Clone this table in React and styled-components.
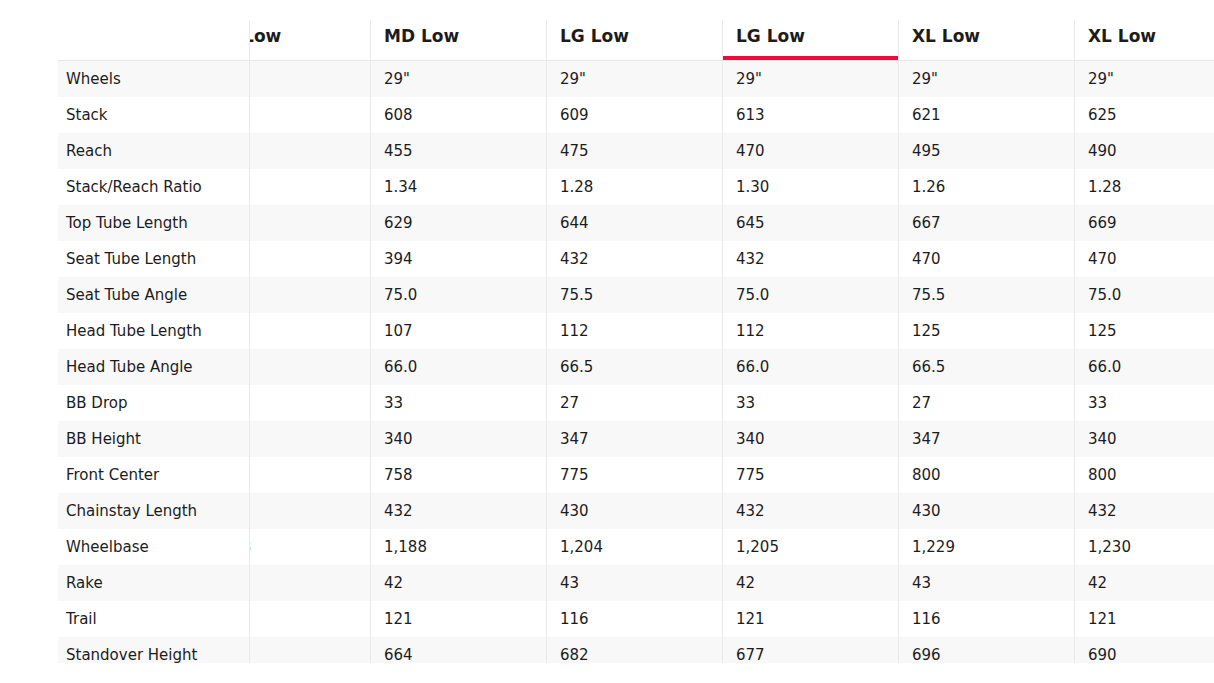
import { useLayoutEffect, useRef } from 'react';
import styled, { createGlobalStyle } from 'styled-components';

const sizes = ['SM Low', 'MD Low', 'LG Low', 'LG Low', 'XL Low', 'XL Low'];
const activeIndex = 3;

const rows = [
  ['Wheels', '29"', '29"', '29"', '29"', '29"', '29"'],
  ['Stack', '599', '608', '609', '613', '621', '625'],
  ['Reach', '430', '455', '475', '470', '495', '490'],
  ['Stack/Reach Ratio', '1.39', '1.34', '1.28', '1.30', '1.26', '1.28'],
  ['Top Tube Length', '605', '629', '644', '645', '667', '669'],
  ['Seat Tube Length', '394', '394', '432', '432', '470', '470'],
  ['Seat Tube Angle', '75.5', '75.0', '75.5', '75.0', '75.5', '75.0'],
  ['Head Tube Length', '97', '107', '112', '112', '125', '125'],
  ['Head Tube Angle', '66.5', '66.0', '66.5', '66.0', '66.5', '66.0'],
  ['BB Drop', '27', '33', '27', '33', '27', '33'],
  ['BB Height', '347', '340', '347', '340', '347', '340'],
  ['Front Center', '730', '758', '775', '775', '800', '800'],
  ['Chainstay Length', '430', '432', '430', '432', '430', '432'],
  ['Wheelbase', '1,158', '1,188', '1,204', '1,205', '1,229', '1,230'],
  ['Rake', '43', '42', '43', '42', '43', '42'],
  ['Trail', '116', '121', '116', '121', '116', '121'],
  ['Standover Height', '660', '664', '682', '677', '696', '690'],
];

const GlobalStyle = createGlobalStyle`
  body {
    margin: 0;
    background: #fff;
    font-family: 'DejaVu Sans', 'Liberation Sans', sans-serif;
    color: #1c1c1c;
  }
`;

export default function App() {
  const scrollRef = useRef(null);

  useLayoutEffect(() => {
    if (scrollRef.current) scrollRef.current.scrollLeft = 56;
  }, []);

  return (
    <>
      <GlobalStyle />
      <Page>
        <Scroller ref={scrollRef}>
          <Table>
            <thead>
              <tr>
                <CornerCell />
                {sizes.map((size, i) => (
                  <HeadCell key={i} $active={i === activeIndex}>
                    {size}
                  </HeadCell>
                ))}
              </tr>
            </thead>
            <tbody>
              {rows.map(([label, ...values], r) => (
                <BodyRow key={label} $shaded={r % 2 === 0}>
                  <LabelCell>{label}</LabelCell>
                  {values.map((v, i) => (
                    <ValueCell key={i}>{v}</ValueCell>
                  ))}
                </BodyRow>
              ))}
            </tbody>
          </Table>
        </Scroller>
      </Page>
    </>
  );
}

const Page = styled.div`
  padding: 20px 0 0 58px;
  height: 643px;
  overflow: hidden;
`;

const Scroller = styled.div`
  width: 100%;
  overflow-x: auto;
  scrollbar-width: none;

  &::-webkit-scrollbar {
    display: none;
  }
`;

const Table = styled.table`
  border-collapse: separate;
  border-spacing: 0;
  table-layout: fixed;
  width: 1248px;

  th,
  td {
    box-sizing: border-box;
  }
`;

const CornerCell = styled.th`
  position: sticky;
  left: 0;
  z-index: 2;
  width: 192px;
  height: 41px;
  padding: 0;
  background: #fff;
  border-right: 1px solid #e9e9e9;
  border-bottom: 1px solid #e6e6e6;
`;

const HeadCell = styled.th`
  width: 176px;
  height: 41px;
  padding: 0 14px 8px 13px;
  text-align: left;
  vertical-align: middle;
  font-size: 17px;
  font-weight: 700;
  color: #1c1c1c;
  border-left: 1px solid #e9e9e9;
  border-bottom: 1px solid #e6e6e6;
  box-shadow: ${(p) => (p.$active ? 'inset 0 -4px 0 #ec0a3f' : 'none')};
`;

const BodyRow = styled.tr`
  background: ${(p) => (p.$shaded ? '#f8f8f8' : '#fff')};
`;

const LabelCell = styled.td`
  position: sticky;
  left: 0;
  z-index: 1;
  height: 36px;
  padding: 0 8px;
  background: inherit;
  border-right: 1px solid #e9e9e9;
  font-size: 15px;
  white-space: nowrap;
`;

const ValueCell = styled.td`
  height: 36px;
  padding: 0 14px 0 13px;
  border-left: 1px solid #e9e9e9;
  font-size: 15px;
  white-space: nowrap;
`;
